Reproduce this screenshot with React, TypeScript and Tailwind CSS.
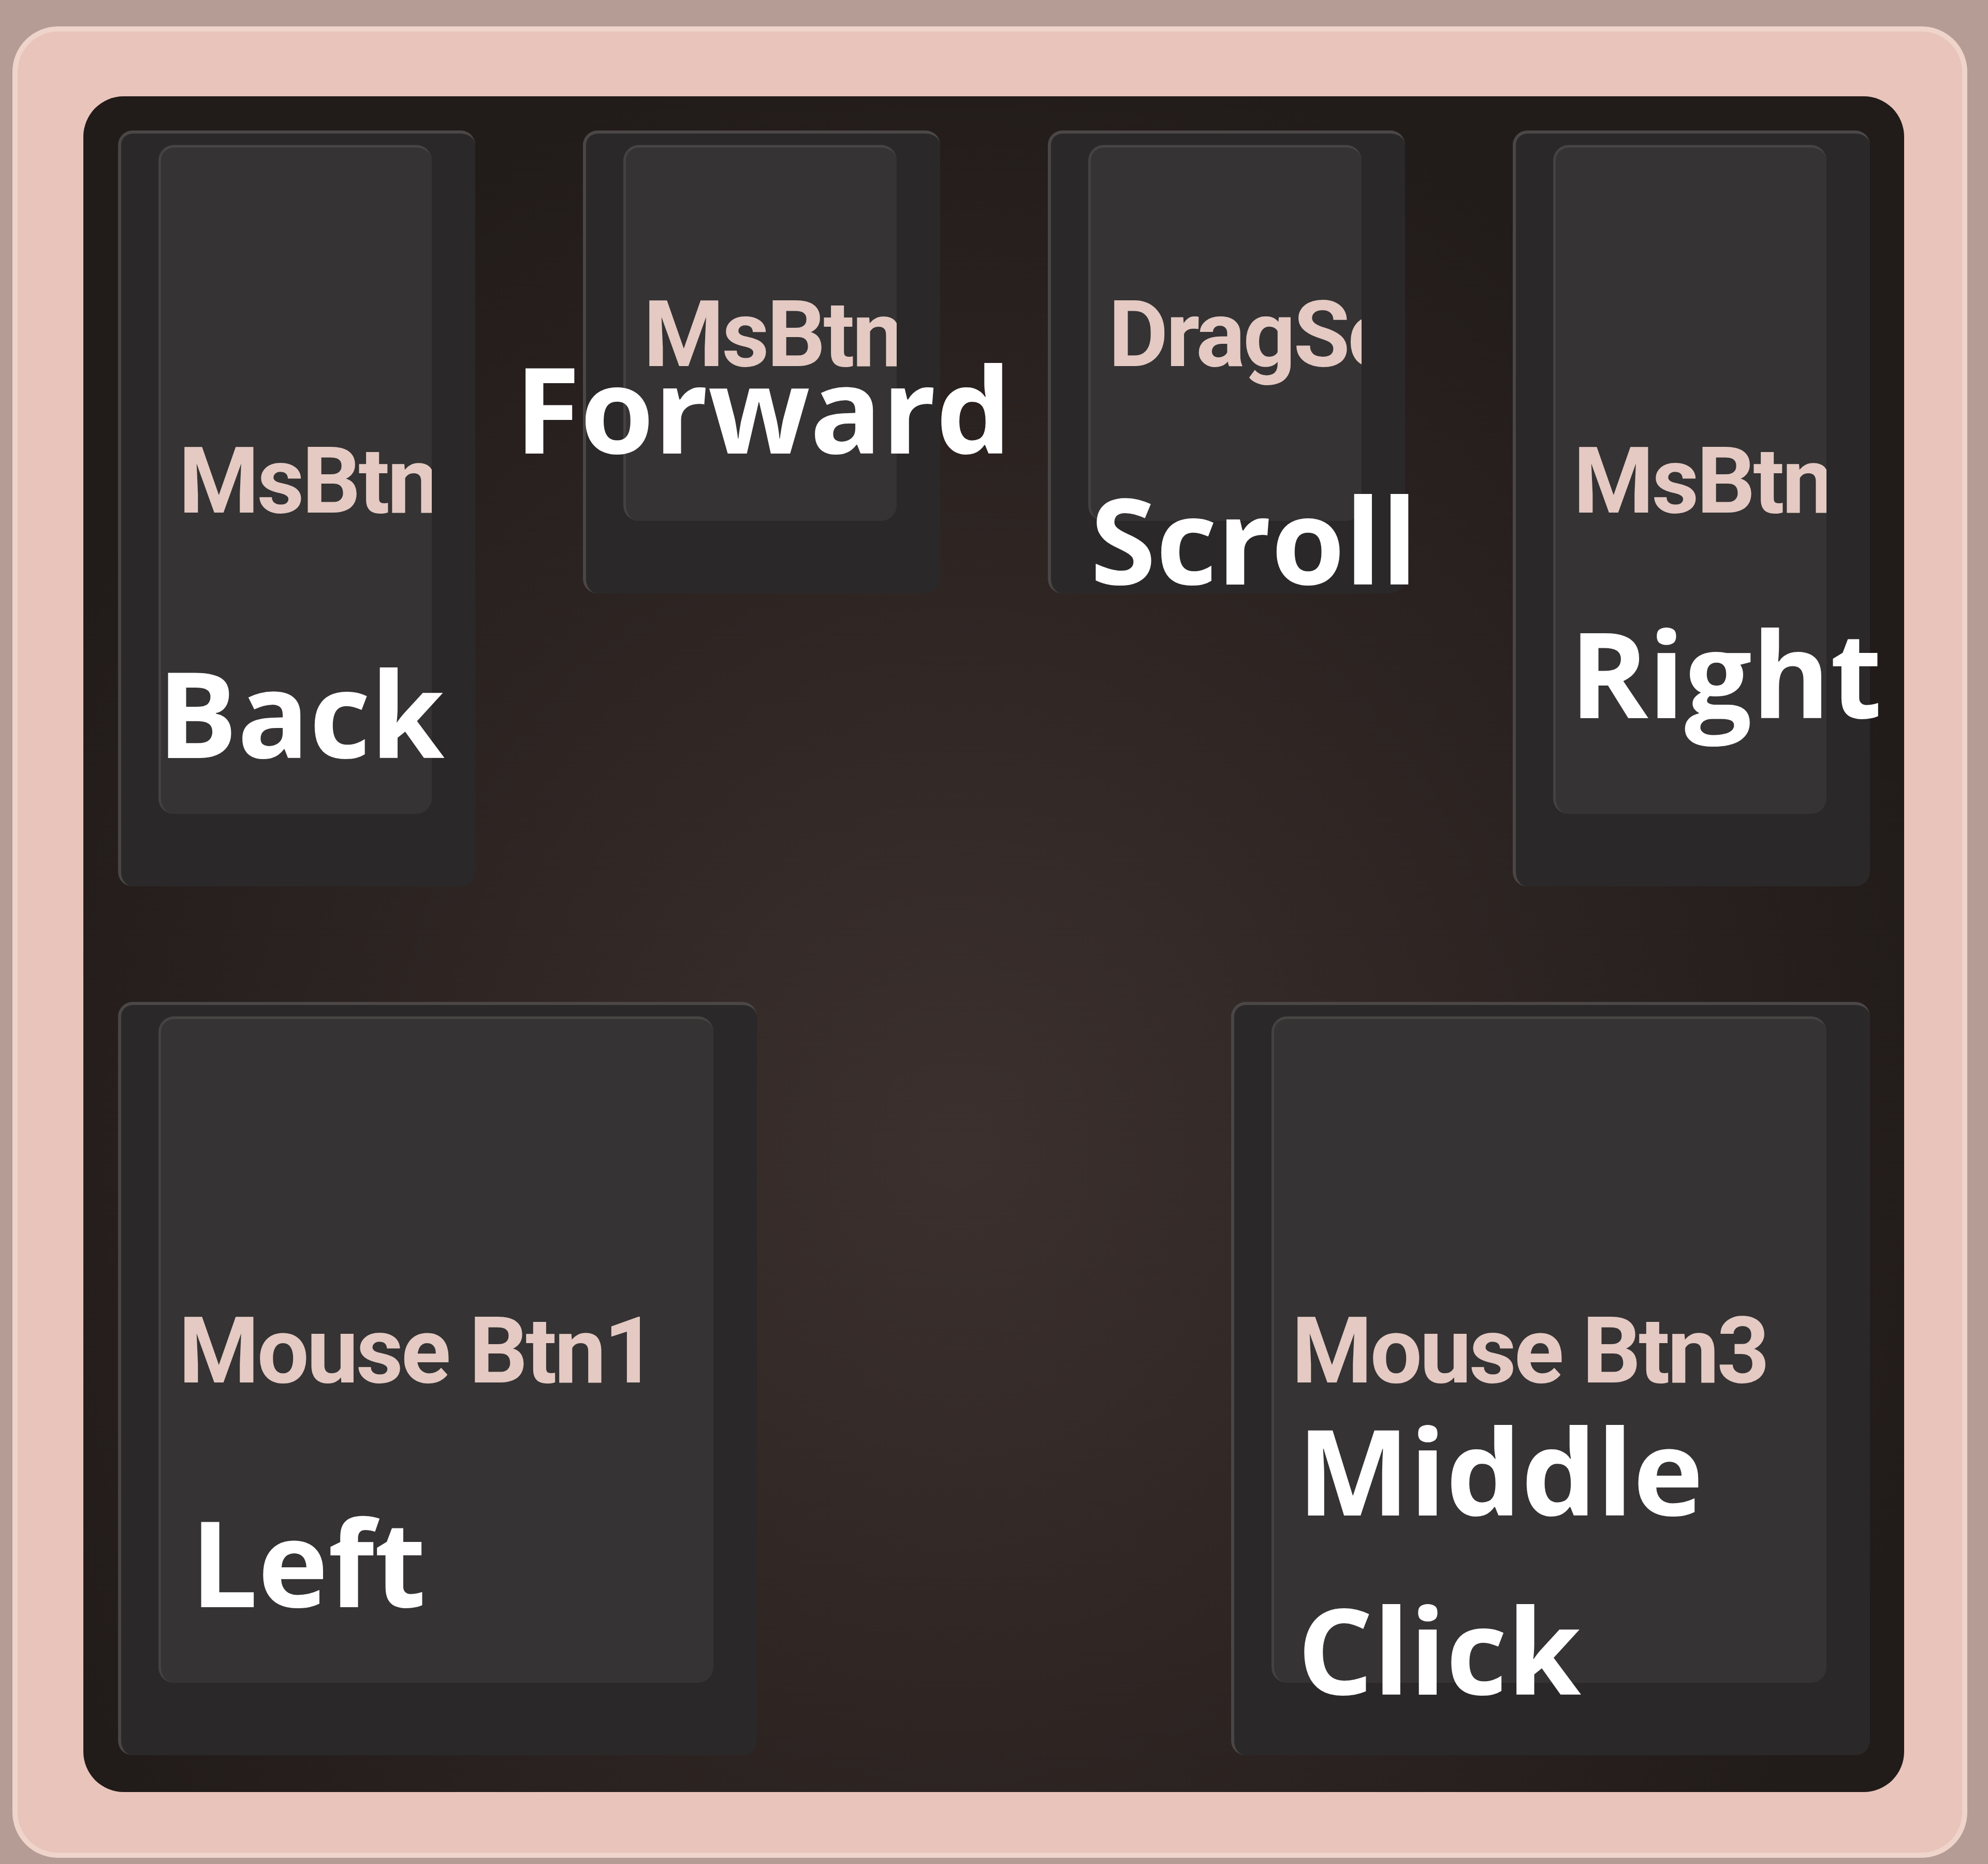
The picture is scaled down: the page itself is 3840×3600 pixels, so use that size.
import React from "react";

type MouseKey = {
  id: string;
  code: string;
  label: string[];
  size: string;
  labelPos: string;
};

const topRow: MouseKey[] = [
  { id: "back", code: "MsBtn4", label: ["Back"], size: "w-[690px] h-[1460px]", labelPos: "top-[944px] left-[70px]" },
  { id: "forward", code: "MsBtn5", label: ["Forward"], size: "w-[690px] h-[894px]", labelPos: "top-[356px] left-1/2 -translate-x-1/2" },
  { id: "scroll", code: "DragScroll", label: ["Scroll"], size: "w-[690px] h-[894px]", labelPos: "top-[609px] left-[76px]" },
  { id: "right", code: "MsBtn2", label: ["Right"], size: "w-[690px] h-[1460px]", labelPos: "top-[867px] left-[104px]" },
];

const bottomRow: MouseKey[] = [
  { id: "left", code: "Mouse Btn1", label: ["Left"], size: "w-[1234px] h-[1455px]", labelPos: "top-[901px] left-[134px]" },
  { id: "middle", code: "Mouse Btn3", label: ["Middle", "Click"], size: "w-[1234px] h-[1455px]", labelPos: "top-[724px] left-[122px]" },
];

const Key = ({ k }: { k: MouseKey }) => (
  <div
    className={`relative flex shrink-0 flex-col rounded-[28px] border-t-[6px] border-l-[6px] border-t-[#4b4747] border-l-[#4a4646] bg-[#2a2829] pt-[22px] pr-[84px] pb-[140px] pl-[72px] ${k.size}`}
  >
    <div className="flex flex-1 items-center overflow-hidden rounded-[30px] border-t-[5px] border-l-[5px] border-t-[#474444] border-l-[#454242] bg-[#353334] pl-[34px]">
      <span className="whitespace-nowrap font-['Roboto',sans-serif] text-[178px] leading-none font-bold tracking-[-0.025em] text-[#e4cac3]">
        {k.code}
      </span>
    </div>
    <div
      className={`absolute font-['Open_Sans',sans-serif] text-[230px] leading-[346px] font-bold whitespace-nowrap text-white ${k.labelPos}`}
    >
      {k.label.map((line) => (
        <div key={line}>{line}</div>
      ))}
    </div>
  </div>
);

export default function App() {
  return (
    <div className="h-[3600px] w-[3840px] overflow-hidden bg-[#b59d95] pt-[51px] pl-[24px]">
      <div className="w-[3776px] rounded-[88px] border-[10px] border-[#efd4cb] bg-[#e8c4ba] pt-[125px] pr-[112px] pb-[117px] pl-[127px]">
        <div className="flex h-[3275px] w-[3517px] flex-col gap-[223px] rounded-[78px] bg-[radial-gradient(ellipse_at_48%_62%,#3b302d_0%,#2e2523_40%,#211b19_75%)] pt-[66px] pr-[66px] pb-[71px] pl-[67px]">
          <div className="flex items-start gap-[208px]">
            {topRow.map((k) => (
              <Key key={k.id} k={k} />
            ))}
          </div>
          <div className="flex items-start justify-between">
            {bottomRow.map((k) => (
              <Key key={k.id} k={k} />
            ))}
          </div>
        </div>
      </div>
    </div>
  );
}
